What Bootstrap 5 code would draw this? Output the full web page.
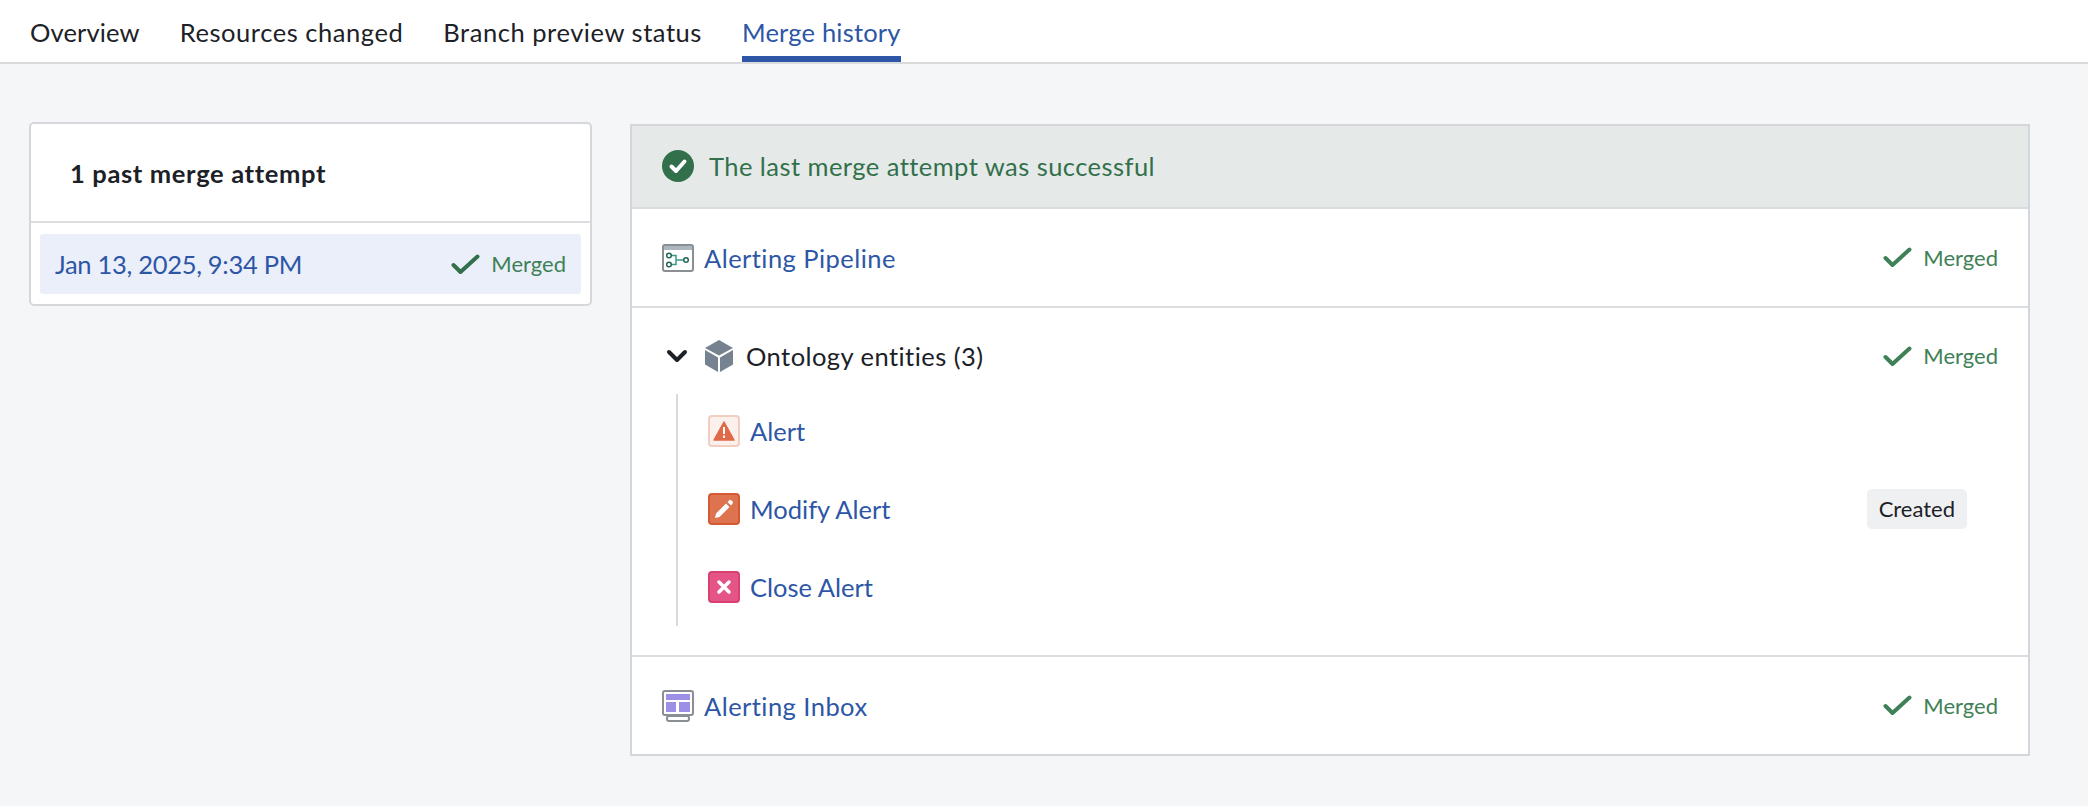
<!DOCTYPE html>
<html lang="en"><head><meta charset="utf-8"><title>Merge history</title>
<link href="https://cdn.jsdelivr.net/npm/bootstrap@5.3.0/dist/css/bootstrap.min.css" rel="stylesheet">
<style>
html,body{height:100%}
body{background:#f5f6f8;color:#1c2127;font-family:"Lato","Noto Sans",sans-serif;font-size:25.5px;line-height:30px;letter-spacing:.45px;overflow:hidden}
a{text-decoration:none;color:#2d56a6}
.tabbar{background:#fff;height:64px;border-bottom:2px solid #d9dadc;padding-left:30px;gap:40px}
.tabitem{color:#1c2127;height:62px;padding-top:17px;letter-spacing:.55px}
.tabitem:first-child{letter-spacing:.15px}
.tabitem.on{color:#2d56a6;border-bottom:6px solid #2d56a6;height:62px;letter-spacing:.2px}
.pagebody{padding:58px 0 0 29px;gap:38px}
.leftcard{width:563px;height:184px;border:2px solid #d5d7da;border-radius:5px;background:#fff}
.leftcard header{height:99px;border-bottom:2px solid #dcdde0;padding:0 0 0 39px;font-weight:700;letter-spacing:.65px}
.attempt{margin:11px 9px;height:60px;background:#ebeff9;border-radius:3px;padding:0 15px 0 15px}
.attempt a{letter-spacing:-.3px}
.rightpanel{width:1400px;height:632px;border:2px solid #d3d6da;background:#fff;margin-top:2px}
.okbanner{height:83px;background:#e5eae8;color:#32704c;border-bottom:2px solid #d9dcdc;padding:0 30px 2px;gap:15px}
.rowline{padding:0 30px;border-bottom:2px solid #dcdde0}
.rowline:last-child{border-bottom:0}
.h-pipe{height:99px}.h-inbox{height:97px}
.ontology{height:349px;padding-top:10px}
.onthead{height:76px}
.chevwrap{margin-left:3px;margin-right:16px}
.cubemark{margin-right:13px}
.tree{margin-left:14px;border-left:2px solid #d9dadc;height:232px;padding:1px 0 0 30px;gap:6px}
.leaf{height:72px;padding-right:31px;letter-spacing:0}
.merged{color:#3f8157;font-size:22px;letter-spacing:0;gap:11px}
.made{background:#eff0f2;color:#1c2127;border-radius:5px;font-size:22px;padding:5px 12px;height:40px;line-height:30px}
.gapico,.gapico2{gap:10px}
</style></head><body>
<nav class="tabbar d-flex align-items-start">
<a class="tabitem" href="#">Overview</a><a class="tabitem" href="#">Resources changed</a><a class="tabitem" href="#">Branch preview status</a><a class="tabitem on" href="#">Merge history</a>
</nav>
<main class="pagebody d-flex align-items-start">
<section class="leftcard">
<header class="d-flex align-items-center">1 past merge attempt</header>
<div class="attempt d-flex align-items-center justify-content-between"><a href="#">Jan 13, 2025, 9:34 PM</a>
<span class="merged d-flex align-items-center"><svg width="29" height="21" viewBox="0 0 29 21"><path d="M2.500 11 9.500 18 26.500 2.500" fill="none" stroke="#32704c" stroke-width="4" stroke-linecap="round" stroke-linejoin="round"/></svg>Merged</span></div>
</section>
<section class="rightpanel">
<div class="okbanner d-flex align-items-center"><svg width="32" height="32" viewBox="0 0 32 32"><circle cx="16" cy="16" r="16" fill="#32704c"/><path d="M9.500 16.500 14 21 22.500 11.500" fill="none" stroke="#fff" stroke-width="4" stroke-linecap="round" stroke-linejoin="round"/></svg><span>The last merge attempt was successful</span></div>
<div class="rowline h-pipe d-flex align-items-center justify-content-between">
<span class="d-flex align-items-center gapico"><svg width="32" height="28" viewBox="0 0 32 28"><rect x="1" y="1" width="30" height="26" rx="2" fill="#fff" stroke="#8a8f94" stroke-width="2"/><rect x="2" y="2" width="28" height="4" fill="#aeb6c0"/><path d="M9 11.500H14V20.500H9M14 16H22" fill="none" stroke="#3a9a8a" stroke-width="1.500"/><circle cx="7" cy="11.500" r="2.300" fill="#fff" stroke="#226655" stroke-width="1.500"/><circle cx="7" cy="20.500" r="2.300" fill="#fff" stroke="#226655" stroke-width="1.500"/><circle cx="24" cy="16" r="2.300" fill="#fff" stroke="#226655" stroke-width="1.500"/></svg><a href="#">Alerting Pipeline</a></span>
<span class="merged d-flex align-items-center"><svg width="29" height="21" viewBox="0 0 29 21"><path d="M2.500 11 9.500 18 26.500 2.500" fill="none" stroke="#3f8157" stroke-width="4" stroke-linecap="round" stroke-linejoin="round"/></svg>Merged</span></div>
<div class="rowline ontology">
<div class="onthead d-flex align-items-center justify-content-between">
<span class="d-flex align-items-center"><svg class="chevwrap" width="24" height="16" viewBox="0 0 24 16"><path d="M4 4 12 12 20 4" fill="none" stroke="#1c2127" stroke-width="4" stroke-linecap="round" stroke-linejoin="round"/></svg><svg class="cubemark" width="28" height="32" viewBox="0 0 28 32"><path d="M14 0 28 8 14 15.500 0 8Z" fill="#76828f"/><path d="M0 10 13 17.500V32L0 24.500Z" fill="#76828f"/><path d="M28 10 15 17.500V32L28 24.500Z" fill="#76828f"/></svg><span>Ontology entities (3)</span></span>
<span class="merged d-flex align-items-center"><svg width="29" height="21" viewBox="0 0 29 21"><path d="M2.500 11 9.500 18 26.500 2.500" fill="none" stroke="#3f8157" stroke-width="4" stroke-linecap="round" stroke-linejoin="round"/></svg>Merged</span></div>
<div class="tree d-flex flex-column">
<div class="leaf d-flex align-items-center justify-content-between"><span class="d-flex align-items-center gapico2"><svg width="32" height="32" viewBox="0 0 32 32"><rect x="1" y="1" width="30" height="30" rx="3" fill="#fbf0ec" stroke="#f3cdbf" stroke-width="2"/><path d="M16 7 26 25H6Z" fill="#e06a48" stroke="#e06a48" stroke-width="1.500" stroke-linejoin="round"/><rect x="15" y="12" width="2" height="7" fill="#fff"/><rect x="15" y="20.500" width="2" height="2.500" fill="#fff"/></svg><a href="#">Alert</a></span></div>
<div class="leaf d-flex align-items-center justify-content-between"><span class="d-flex align-items-center gapico2"><svg width="32" height="32" viewBox="0 0 32 32"><rect x="1" y="1" width="30" height="30" rx="3" fill="#de7350" stroke="#d55a34" stroke-width="2"/><path d="M7 25 8 20.500 18 10.500 21.500 14 11.500 24ZM19.500 9 21.500 7Q22.500 6.500 23.500 7.500L24.500 8.500Q25.500 9.500 24.500 10.500L23 12.500Z" fill="#fff"/></svg><a href="#">Modify Alert</a></span><span class="made">Created</span></div>
<div class="leaf d-flex align-items-center justify-content-between"><span class="d-flex align-items-center gapico2"><svg width="32" height="32" viewBox="0 0 32 32"><rect x="1" y="1" width="30" height="30" rx="3" fill="#e55487" stroke="#d8406f" stroke-width="2"/><path d="M11 11 21 21M21 11 11 21" stroke="#fff" stroke-width="3.500" stroke-linecap="round"/></svg><a href="#">Close Alert</a></span></div>
</div></div>
<div class="rowline h-inbox d-flex align-items-center justify-content-between">
<span class="d-flex align-items-center gapico"><svg width="32" height="32" viewBox="0 0 32 32"><rect x="1" y="1" width="30" height="24" rx="2" fill="#fff" stroke="#8a8f94" stroke-width="2"/><rect x="4" y="4" width="24" height="6" fill="#9d8fe6"/><rect x="4" y="12" width="10" height="10" fill="#9d8fe6"/><rect x="17" y="12" width="11" height="10" fill="#9d8fe6"/><rect x="5" y="26" width="22" height="5" rx="2" fill="#fff" stroke="#8a8f94" stroke-width="2"/></svg><a href="#">Alerting Inbox</a></span>
<span class="merged d-flex align-items-center"><svg width="29" height="21" viewBox="0 0 29 21"><path d="M2.500 11 9.500 18 26.500 2.500" fill="none" stroke="#3f8157" stroke-width="4" stroke-linecap="round" stroke-linejoin="round"/></svg>Merged</span></div>
</section>
</main>
<script src="https://cdn.jsdelivr.net/npm/bootstrap@5.3.0/dist/js/bootstrap.bundle.min.js"></script>
</body></html>
